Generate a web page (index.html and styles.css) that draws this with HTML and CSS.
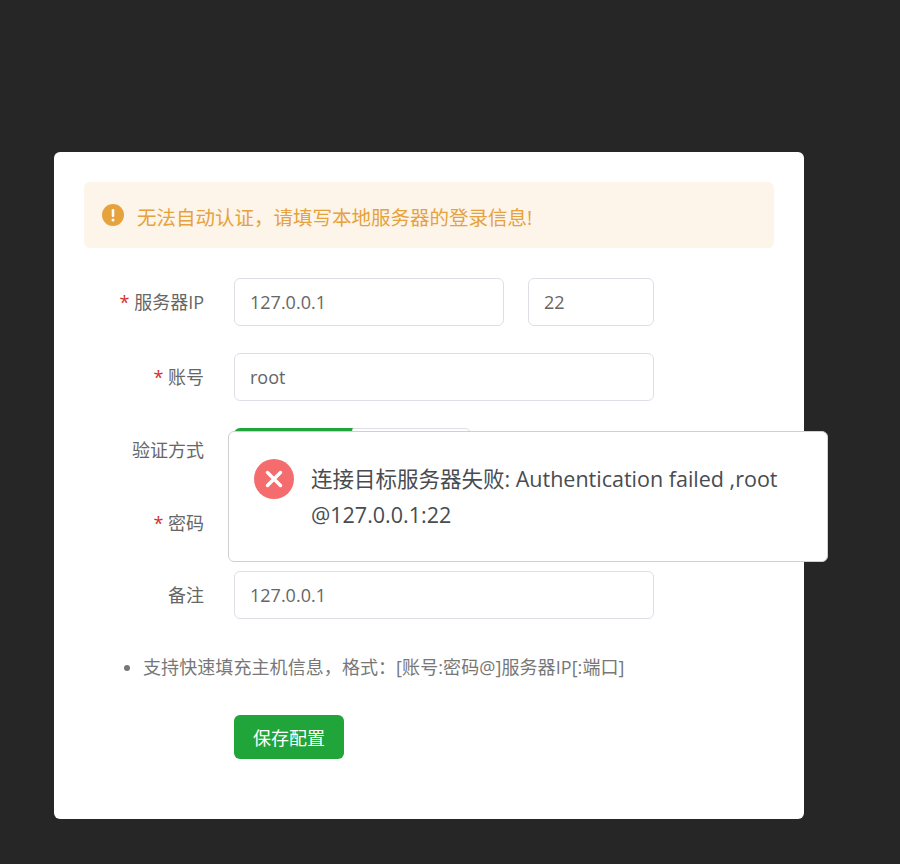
FILE: index.html
```html
<!DOCTYPE html>
<html lang="zh-CN">
<head>
<meta charset="utf-8">
<title>服务器配置</title>
<link rel="stylesheet" href="styles.css">
</head>
<body>
<main class="card">
  <div class="alert">
    <svg class="alert-icon" viewBox="0 0 22 22" aria-hidden="true"><circle cx="11" cy="11" r="11" fill="#e6a23c"/><rect x="9.7" y="5" width="2.6" height="8" rx="1.2" fill="#fff"/><circle cx="11" cy="16" r="1.5" fill="#fff"/></svg>
    <span class="alert-text">无法自动认证，请填写本地服务器的登录信息!</span>
  </div>
  <form class="form">
    <div class="row row-ip">
      <label class="label"><i>*</i> 服务器IP</label>
      <div class="input ip">127.0.0.1</div>
      <div class="input port">22</div>
    </div>
    <div class="row row-account">
      <label class="label"><i>*</i> 账号</label>
      <div class="input wide">root</div>
    </div>
    <div class="row row-auth">
      <label class="label">验证方式</label>
      <div class="tabs">
        <div class="tab active">密码验证</div>
        <div class="tab">私钥验证</div>
      </div>
    </div>
    <div class="row row-pass">
      <label class="label"><i>*</i> 密码</label>
      <div class="input wide"></div>
    </div>
    <div class="row row-note">
      <label class="label">备注</label>
      <div class="input wide">127.0.0.1</div>
    </div>
    <ul class="tips">
      <li>支持快速填充主机信息，格式：[账号:密码@]服务器IP[:端口]</li>
    </ul>
    <button type="button" class="save">保存配置</button>
  </form>
</main>
<div class="toast">
  <svg class="toast-icon" viewBox="0 0 40 40" aria-hidden="true"><circle cx="20" cy="20" r="20" fill="#f56c6f"/><path d="M13.5 13.5l13 13M26.5 13.5l-13 13" stroke="#fff" stroke-width="3.4" stroke-linecap="round" fill="none"/></svg>
  <p>连接目标服务器失败: Authentication failed ,root @127.0.0.1:22</p>
</div>
</body>
</html>
```
FILE: styles.css
```css
* { box-sizing: border-box; }
html, body { margin: 0; height: 864px; overflow: hidden; }
body {
  position: relative;
  background: #262626;
  font-family: "Open Sans", "Noto Sans CJK SC", sans-serif;
  font-size: 18px;
  color: #666;
}
.card {
  width: 750px;
  height: 667px;
  margin: 152px 0 0 54px;
  padding: 30px;
  background: #fff;
  border-radius: 6px;
}
.alert {
  display: flex;
  align-items: center;
  height: 66px;
  padding: 0 18px;
  gap: 13px;
  background: #fdf4ea;
  border-radius: 6px;
  color: #e6a23c;
  font-size: 19.5px;
}
.alert-icon { width: 22px; height: 22px; flex: none; }
.alert-text { margin-top: 3px; }
.form { padding-top: 30px; }
.row { display: flex; align-items: center; }
.row-ip, .row-account { margin-bottom: 27px; }
.row-auth { margin-bottom: 27px; }
.row-pass { margin-bottom: 24px; }
.label {
  width: 120px;
  margin: 0 30px 2px 0;
  text-align: right;
  white-space: nowrap;
}
.label i { color: #d32f2f; font-style: normal; }
.input {
  height: 48px;
  line-height: 46px;
  padding: 0 15px;
  border: 1px solid #dcdfe6;
  border-radius: 6px;
  color: #666;
}
.ip { width: 270px; margin-right: 24px; }
.port { width: 126px; }
.wide { width: 420px; }
.tabs { display: flex; height: 44px; }
.tab {
  width: 118px;
  border: 1px solid #dcdfe6;
  border-left-width: 0;
  text-align: center;
  line-height: 40px;
  border-radius: 0 6px 6px 0;
}
.tab.active {
  width: 119px;
  border-top: 3px solid #20a53a;
  border-left: 1px solid #dcdfe6;
  border-radius: 6px 0 0 6px;
  color: #20a53a;
}
.tips {
  margin: 36px 0 0;
  padding: 0 0 0 59px;
  line-height: 24px;
  letter-spacing: 0.08px;
  color: #777;
}
.save {
  display: block;
  width: 110px;
  height: 44px;
  margin: 36px 0 0 150px;
  padding: 0;
  border: 0;
  border-radius: 6px;
  background: #20a53a;
  color: #fff;
  font: inherit;
}
.toast {
  position: absolute;
  left: 228px;
  top: 431px;
  width: 600px;
  height: 131px;
  padding: 27px 40px 0 25px;
  display: flex;
  gap: 17px;
  background: #fff;
  border: 1px solid #d0d0d0;
  border-radius: 6px;
  color: #484c50;
}
.toast-icon { width: 40px; height: 40px; flex: none; }
.toast p {
  margin: 2px 0 0;
  font-size: 21.5px;
  line-height: 36px;
}
```
